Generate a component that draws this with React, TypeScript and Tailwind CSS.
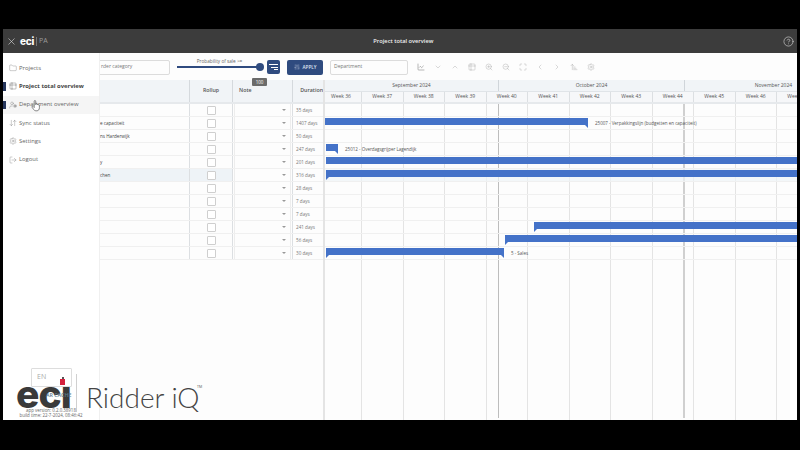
import React from 'react'
import {
  ArrowUpNarrowWide,
  ChartLine,
  ChevronDown,
  ChevronLeft,
  ChevronRight,
  ChevronUp,
  CircleHelp,
  Folder,
  LogOut,
  Maximize,
  Settings,
  SlidersVertical,
  Table2,
  UserCog,
  ArrowDownUp,
  X,
  ZoomIn,
  ZoomOut,
} from 'lucide-react'

const menu = [
  { label: 'Projects', icon: Folder },
  { label: 'Project total overview', icon: Table2, active: true },
  { label: 'Department overview', icon: UserCog, marked: true, hover: true },
  { label: 'Sync status', icon: ArrowDownUp },
  { label: 'Settings', icon: Settings },
  { label: 'Logout', icon: LogOut },
]

const toolIcons = [
  ChartLine,
  ChevronDown,
  ChevronUp,
  Table2,
  ZoomIn,
  ZoomOut,
  Maximize,
  ChevronLeft,
  ChevronRight,
  ArrowUpNarrowWide,
  Settings,
]

const rows = [
  { name: '', days: '35 days' },
  { name: 'e capaciteit', days: '1407 days' },
  { name: 'ns Harderwijk', days: '50 days' },
  { name: '', days: '247 days' },
  { name: 'y', days: '201 days' },
  { name: 'chen', days: '316 days', selected: true },
  { name: '', days: '28 days' },
  { name: '', days: '7 days' },
  { name: '', days: '7 days' },
  { name: '', days: '241 days' },
  { name: '', days: '56 days' },
  { name: '', days: '30 days' },
]

const weeks = [36, 37, 38, 39, 40, 41, 42, 43, 44, 45, 46, 47]

// left and width are px from the start of the timeline
const bars = [
  { row: 1, left: 0, width: 263, tailEnd: true, label: '25007 - Verpakkingslijn (budgetten en capaciteit)' },
  { row: 3, left: 1, width: 12, tailEnd: true, label: '25012 - Overdagsgrijper Lagendijk' },
  { row: 4, left: 1, width: 471 },
  { row: 5, left: 1, width: 471, tailStart: true },
  { row: 9, left: 209, width: 263, tailStart: true },
  { row: 10, left: 180, width: 292, tailStart: true },
  { row: 11, left: 1, width: 178, tailStart: true, tailEnd: true, label: '5 - Sales' },
]

function Header() {
  return (
    <div className="relative flex h-[24px] shrink-0 items-center bg-[#3c3c3c] px-[3px]">
      <X size={11} strokeWidth={1.25} className="text-[#e4e4e4]" />
      <span className="ml-[3px] font-['Inter'] text-[10px] font-extrabold leading-none tracking-tight text-white">eci</span>
      <span className="ml-[2px] h-[9px] w-px bg-[#777]" />
      <span className="ml-[2px] text-[7px] text-[#9a9a9a]">PA</span>
      <span className="flex-1 pr-[24px] text-center text-[5.7px] font-semibold text-[#f0f0f0]">Project total overview</span>
      <CircleHelp size={11} strokeWidth={1.25} className="text-[#e4e4e4]" />
    </div>
  )
}

function Toolbar() {
  return (
    <div className="flex h-[27px] shrink-0 items-center pt-px">
      <div className="flex h-[15px] w-[167px] items-center rounded-[2px] border border-[#dcdcdc] pl-[97px] text-[5px] text-[#777]">
        rder category
      </div>
      <div className="relative mb-[4.5px] ml-[7px] flex w-[87px] flex-col items-center">
        <span className="pr-[2px] text-[4.7px] leading-[5px] text-[#666]">Probability of sale &gt;=</span>
        <div className="-mt-[0.5px] flex h-[8px] w-full items-center">
          <div className="h-[1.5px] flex-1 bg-[#2f4b7f]" />
          <div className="-ml-[1px] h-[8px] w-[8px] rounded-full bg-[#2f4b7f]" />
        </div>
        <div className="absolute left-[75px] top-[19.5px] flex h-[8px] w-[15px] items-center justify-center rounded-[1px] bg-[#6b6b6b] text-[4.5px] text-white">
          100
        </div>
      </div>
      <div className="ml-[3px] flex h-[14px] w-[13px] flex-col items-end justify-center gap-[1.5px] rounded-[2px] bg-[#2f4b7f] pr-[2px]">
        <span className="h-px w-[9px] bg-white" />
        <span className="h-px w-[7px] bg-white" />
        <span className="h-px w-[4px] bg-white" />
      </div>
      <div className="ml-[7px] flex h-[15px] w-[36px] items-center justify-center gap-[3px] rounded-[2px] bg-[#2f4b7f] text-[4.6px] font-semibold text-[#dfe6f2]">
        <SlidersVertical size={6} strokeWidth={1.25} />
        APPLY
      </div>
      <div className="ml-[7px] flex h-[15px] w-[78px] items-center rounded-[2px] border border-[#dcdcdc] pl-[3px] text-[5px] text-[#777]">
        Department
      </div>
      <div className="ml-[9px] flex items-center gap-[9px]">
        {toolIcons.map((Icon, i) => (
          <Icon key={i} size={8} strokeWidth={1.25} className={i === 0 ? 'text-[#555]' : 'text-[#a4a4a4]'} />
        ))}
      </div>
    </div>
  )
}

function ProjectTable() {
  return (
    <div className="flex h-full w-[320px] shrink-0 flex-col">
      <div className="flex h-[24px] shrink-0 items-center border-b-2 border-[#e6e9ec] bg-[#f1f4f7] text-[5.3px] font-semibold text-[#555]">
        <div className="h-full w-[186px]" />
        <div className="flex h-full w-[43px] items-center justify-center border-l border-[#d5d9dd]">Rollup</div>
        <div className="flex h-full w-[61px] items-center border-x border-[#d5d9dd] pl-[6px]">Note</div>
        <div className="flex h-full w-[30px] items-center justify-end">Duration</div>
      </div>
      {rows.map((row, i) => (
        <div key={i} className="flex h-[13px] shrink-0 items-center border-b border-[#f0f0f0] text-[4.6px] text-[#666]">
          <div className={`flex h-full w-[186px] items-center pl-[97px] text-[#444] ${row.selected ? 'bg-[#eef3f7]' : ''}`}>{row.name}</div>
          <div className={`flex h-full w-[43px] items-center justify-center border-l border-[#dcdfe2] ${row.selected ? 'bg-[#eef3f7]' : ''}`}>
            <span className="h-[9px] w-[9px] rounded-[1px] border border-[#cfcfcf] bg-white" />
          </div>
          <div className="flex h-full w-[61px] border-x border-[#dcdfe2] px-px">
            <div className="flex h-full flex-1 items-center justify-end border-x border-[#ededed] pr-[4px]">
              <span className="h-0 w-0 border-x-[2px] border-t-[2.5px] border-x-transparent border-t-[#999]" />
            </div>
          </div>
          <div className="flex h-full w-[30px] items-center pl-[3px] text-[#777]">{row.days}</div>
        </div>
      ))}
    </div>
  )
}

function Timeline() {
  return (
    <div className="relative h-full flex-1 overflow-hidden">
      {/* week grid, runs the full height behind the rows */}
      <div className="absolute inset-0 flex">
        {weeks.map((w, i) => (
          <div key={w} className={`h-full shrink-0 border-r border-[#e4e4e4] ${i === 0 ? 'w-[37px]' : 'w-[41.5px]'}`} />
        ))}
      </div>
      <div className="absolute bottom-[2px] left-[173px] top-0 w-px bg-[#bdbdbd]" />
      <div className="absolute bottom-[2px] left-[358px] top-0 w-[1.5px] bg-[#d0d0d0]" />

      <div className="relative flex h-[12px] border-b border-[#e0e4e8] bg-[#f1f4f7] text-[5px] text-[#555]">
        <div className="flex w-[173px] shrink-0 items-center justify-center">September 2024</div>
        <div className="flex w-[186px] shrink-0 items-center justify-center border-l border-[#d0d5da]">October 2024</div>
        <div className="flex w-[178px] shrink-0 items-center justify-center border-l border-[#d0d5da]">November 2024</div>
      </div>
      <div className="relative flex h-[12px] border-b-2 border-[#e6e9ec] bg-[#f6f7f9] text-[5px] text-[#555]">
        {weeks.map((w, i) => (
          <div key={w} className={`flex shrink-0 items-center justify-center border-r border-[#dcdfe2] whitespace-nowrap ${i === 0 ? 'w-[37px] pr-[4px]' : 'w-[41.5px]'}`}>
            Week {w}
          </div>
        ))}
      </div>
      <div className="relative">
        {rows.map((row, i) => {
          const bar = bars.find((b) => b.row === i)
          return (
            <div key={i} className={`relative h-[13px] border-b border-[#f0f0f0] ${row.selected ? 'bg-[#eef3f7]/70' : ''}`}>
              {bar && (
                <>
                  <div
                    className="absolute top-px h-[7px] bg-[#4472c8]"
                    style={{ left: bar.left, width: bar.width }}
                  >
                    {bar.tailStart && <span className="absolute left-0 top-full h-[3px] w-[3px] bg-[#4472c8] [clip-path:polygon(0_0,100%_0,0_100%)]" />}
                    {bar.tailEnd && <span className="absolute right-0 top-full h-[3px] w-[3px] bg-[#4472c8] [clip-path:polygon(0_0,100%_0,100%_100%)]" />}
                  </div>
                  {bar.label && (
                    <span
                      className="absolute top-0 whitespace-nowrap text-[4.5px] leading-[13px] text-[#555]"
                      style={{ left: bar.left + bar.width + 7 }}
                    >
                      {bar.label}
                    </span>
                  )}
                </>
              )}
            </div>
          )
        })}
      </div>
    </div>
  )
}

function Drawer() {
  return (
    <div className="absolute bottom-0 left-0 top-[24px] flex w-[97px] flex-col border-r border-[#f0f0f0] bg-white pt-[6px]">
      {menu.map((item) => (
        <div
          key={item.label}
          className={`relative flex h-[18.3px] items-center gap-[2px] pl-[6px] text-[5.9px] ${item.active ? 'text-[5.8px] font-bold text-[#444]' : 'text-[#666]'} ${item.hover ? 'bg-[#f5f5f5]' : ''}`}
        >
          {(item.active || item.marked) && <span className="absolute left-0 top-[5px] h-[8.5px] w-[3px] bg-[#26365c]" />}
          <item.icon size={8} strokeWidth={1} className="shrink-0" />
          {item.label}
        </div>
      ))}
      {/* hand pointer over the department entry */}
      <svg className="absolute left-[28px] top-[47px]" width="10" height="12" viewBox="0 0 10 12">
        <path
          d="M3.2 1.2c0-.9 1.5-.9 1.5 0v3.4l.1-.6c.2-.6 1.2-.5 1.3.2l.1.6c.2-.6 1.1-.5 1.2.2.3-.4 1-.2 1 .4v2.4c0 1.700-1 3-2.500 3H4.800c-1 0-1.600-.5-2.100-1.300L1 7.200c-.4-.7.500-1.300 1.100-.7l1.100 1.100z"
          fill="#fff"
          stroke="#555"
          strokeWidth="0.7"
        />
      </svg>
    </div>
  )
}

function Branding() {
  return (
    <>
      <div className="absolute left-[28px] top-[339px] flex h-[19px] w-[41px] items-center rounded-[1px] border border-[#dddddd] bg-white pl-[5px] text-[7px] text-[#aaa]">
        EN
      </div>
      <div className="absolute left-[73px] top-[345px] h-[38px] w-px bg-[#d0d0d0]" />
      <span className="absolute left-[13px] top-[345px] font-['Inter'] text-[39px] font-extrabold leading-[40px] tracking-[-1px] text-[#3a3a3a]">ecı</span>
      <span className="absolute left-[59px] top-[347.5px] h-[2px] w-[2px] bg-[#555]" />
      <span className="absolute left-[57px] top-[350px] h-[6px] w-[5px] bg-[#d5213d]" />
      <span className="absolute left-[43px] top-[364px] text-[5.3px] font-semibold leading-none text-[#5c7a90]">AR CACHE</span>
      <span className="absolute left-[83px] top-[349px] font-['Lato'] text-[28px] font-light leading-[38px] text-[#444]">Ridder iQ</span>
      <span className="absolute left-[194px] top-[356px] text-[3.5px] leading-none text-[#555]">TM</span>
      <div className="absolute left-[1px] top-[379px] w-[94px] text-center text-[4.4px] leading-[5px] text-[#666]">
        <div>app version: 0.2.0.38918</div>
        <div>build time: 22-7-2024, 08:46:42</div>
      </div>
    </>
  )
}

export default function App() {
  return (
    <div className="h-[450px] w-[800px] overflow-hidden bg-black px-[3px] pt-[29px] font-['Open_Sans',sans-serif]">
      <div className="relative flex h-[391px] w-[794px] flex-col bg-[#fdfdfd]">
        <Header />
        <Toolbar />
        <div className="flex min-h-0 flex-1">
          <ProjectTable />
          <div className="h-full w-[2px] shrink-0 bg-[#e4e4e4]" />
          <Timeline />
        </div>
        <Drawer />
        <Branding />
      </div>
    </div>
  )
}
